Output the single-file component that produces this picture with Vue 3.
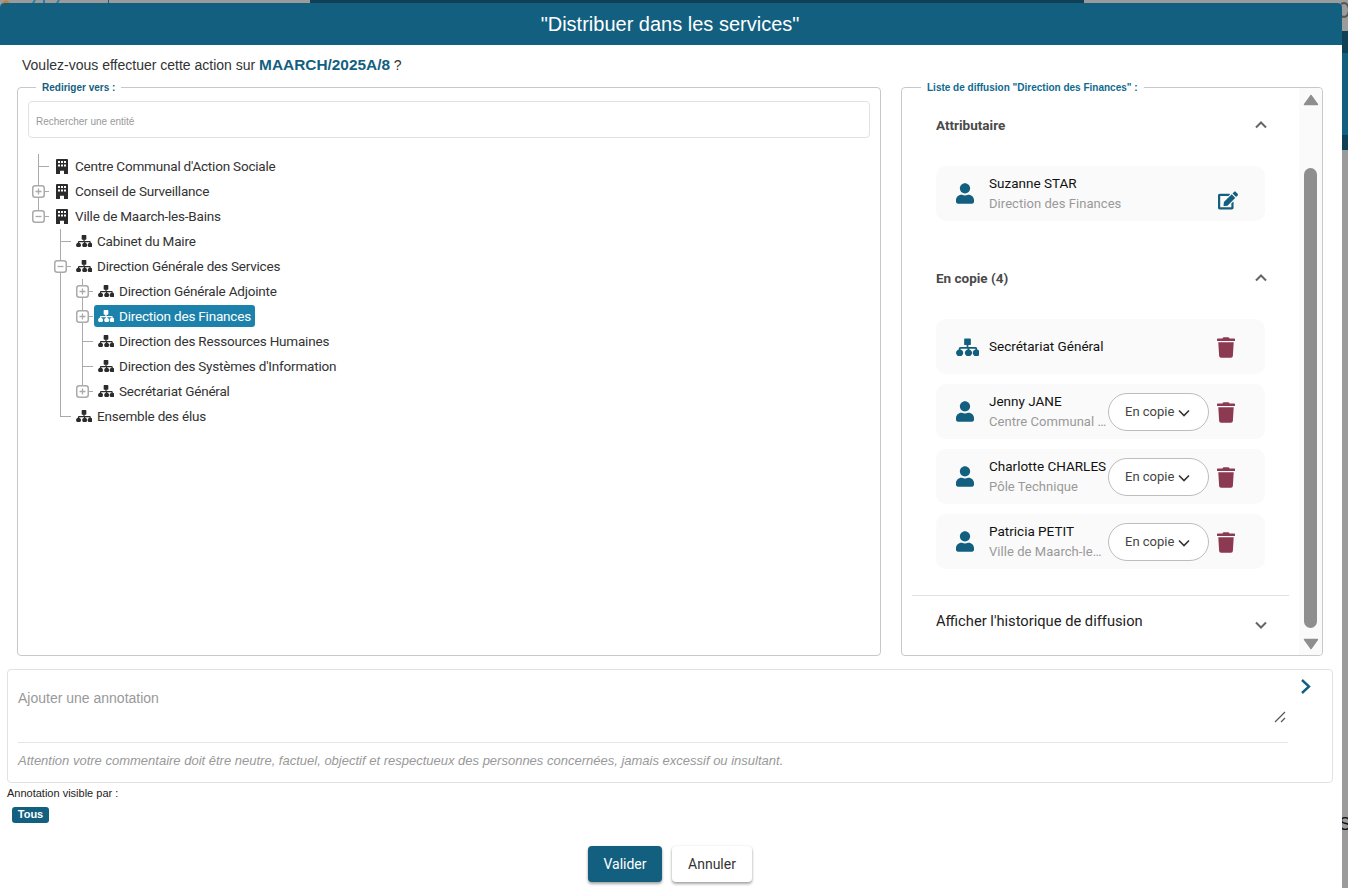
<script setup>
const sitemap = 'M9.5 0h5a1 1 0 0 1 1 1v5a1 1 0 0 1-1 1h-1.6v2h7.6a1.6 1.6 0 0 1 1.6 1.6v.9a3.7 3.7 0 1 1-1.8 0v-.7h-6.4v.7a3.7 3.7 0 1 1-1.8 0v-.7H4.7v.7a3.7 3.7 0 1 1-1.8 0v-.9A1.6 1.6 0 0 1 4.5 9h6.6V7H9.5a1 1 0 0 1-1-1V1a1 1 0 0 1 1-1z'
const building = 'M1 0h10a1 1 0 0 1 1 1v14H8v-3.2H4V15H0V1a1 1 0 0 1 1-1zM2 2v2h2V2zM5 2v2h2V2zM8 2v2h2V2zM2 5.5v2h2v-2zM5 5.5v2h2v-2zM8 5.5v2h2v-2z'
const user = 'M224 256c70.7 0 128-57.3 128-128S294.7 0 224 0 96 57.3 96 128s57.3 128 128 128zm89.6 32h-16.7c-22.2 10.2-46.9 16-72.9 16s-50.6-5.8-72.9-16h-16.7C60.2 288 0 348.2 0 422.4V464c0 26.5 21.5 48 48 48h352c26.5 0 48-21.5 48-48v-41.6c0-74.2-60.2-134.4-134.4-134.4z'
const trash = 'M432 32H312l-9.4-18.7A24 24 0 0 0 281.1 0H166.8a23.72 23.72 0 0 0-21.4 13.3L136 32H16A16 16 0 0 0 0 48v32a16 16 0 0 0 16 16h416a16 16 0 0 0 16-16V48a16 16 0 0 0-16-16zM53.2 467a48 48 0 0 0 47.9 45h245.8a48 48 0 0 0 47.9-45L416 128H32z'
const edit = 'M402.6 83.2l90.2 90.2c3.8 3.8 3.8 10 0 13.8L274.4 405.6l-92.8 10.3c-12.4 1.4-22.9-9.1-21.5-21.5l10.3-92.8L388.8 83.2c3.8-3.8 10-3.8 13.8 0zm162-22.9l-48.8-48.8c-15.2-15.2-39.9-15.2-55.2 0l-35.4 35.4c-3.8 3.8-3.8 10 0 13.8l90.2 90.2c3.8 3.8 10 3.8 13.8 0l35.4-35.4c15.2-15.3 15.2-40 0-55.2zM384 346.2V448H64V128h229.8c3.2 0 6.2-1.3 8.5-3.5l40-40c7.6-7.6 2.2-20.5-8.5-20.5H48C21.5 64 0 85.5 0 112v352c0 26.5 21.5 48 48 48h352c26.5 0 48-21.5 48-48V306.2c0-10.7-12.9-16-20.5-8.5l-40 40c-2.2 2.3-3.5 5.3-3.5 8.5z'

const copies = [
  { name: 'Secrétariat Général', entity: true },
  { name: 'Jenny JANE', sub: "Centre Communal d'Action Sociale", role: 'En copie' },
  { name: 'Charlotte CHARLES', sub: 'Pôle Technique', role: 'En copie' },
  { name: 'Patricia PETIT', sub: 'Ville de Maarch-les-Bains', role: 'En copie' }
]
const level2 = [
  { label: 'Direction Générale Adjointe', closed: true },
  { label: 'Direction des Finances', closed: true, selected: true },
  { label: 'Direction des Ressources Humaines' },
  { label: "Direction des Systèmes d'Information" },
  { label: 'Secrétariat Général', closed: true }
]
</script>

<template>
  <div class="page">
    <div class="backdrop" aria-hidden="true">
      <span class="bd-logo"></span>
      <span class="bd-blue b1"></span>
      <span class="bd-blue b2"></span>
      <span class="bd-blue b3"></span>
      <span class="bd-blue b4"></span>
      <span class="bd-top"></span>
      <span class="bd-ring"></span>
      <span class="bd-side"></span>
      <span class="bd-s">S</span>
    </div>

    <section class="dialog">
      <header class="head">"Distribuer dans les services"</header>
      <p class="question">Voulez-vous effectuer cette action sur <b>MAARCH/2025A/8</b> ?</p>

      <div class="columns">
        <div class="panel left">
          <span class="legend lg-left">Rediriger vers :</span>
          <div class="search">Rechercher une entité</div>
          <ul class="tree">
            <li>
              <div class="node"><span class="anchor"><span class="slot"><svg class="bld" viewBox="0 0 12 15"><path fill-rule="evenodd" :d="building" /></svg></span>Centre Communal d'Action Sociale</span></div>
            </li>
            <li>
              <div class="node">
                <svg class="tog" viewBox="0 0 13 13"><rect x=".75" y=".75" width="11.5" height="11.5" rx="2.5" /><path d="M3.5 6.5h6M6.5 3.5v6" /></svg>
                <span class="anchor"><span class="slot"><svg class="bld" viewBox="0 0 12 15"><path fill-rule="evenodd" :d="building" /></svg></span>Conseil de Surveillance</span>
              </div>
            </li>
            <li>
              <div class="node">
                <svg class="tog" viewBox="0 0 13 13"><rect x=".75" y=".75" width="11.5" height="11.5" rx="2.5" /><path d="M3.5 6.5h6" /></svg>
                <span class="anchor"><span class="slot"><svg class="bld" viewBox="0 0 12 15"><path fill-rule="evenodd" :d="building" /></svg></span>Ville de Maarch-les-Bains</span>
              </div>
              <ul>
                <li>
                  <div class="node"><span class="anchor"><span class="slot"><svg class="org" viewBox="0 0 24 18"><path :d="sitemap" /></svg></span>Cabinet du Maire</span></div>
                </li>
                <li>
                  <div class="node">
                    <svg class="tog" viewBox="0 0 13 13"><rect x=".75" y=".75" width="11.5" height="11.5" rx="2.5" /><path d="M3.5 6.5h6" /></svg>
                    <span class="anchor"><span class="slot"><svg class="org" viewBox="0 0 24 18"><path :d="sitemap" /></svg></span>Direction Générale des Services</span>
                  </div>
                  <ul>
                    <li v-for="n in level2" :key="n.label">
                      <div class="node">
                        <svg v-if="n.closed" class="tog" viewBox="0 0 13 13"><rect x=".75" y=".75" width="11.5" height="11.5" rx="2.5" /><path d="M3.5 6.5h6M6.5 3.5v6" /></svg>
                        <span class="anchor" :class="{ selected: n.selected }"><span class="slot"><svg class="org" viewBox="0 0 24 18"><path :d="sitemap" /></svg></span>{{ n.label }}</span>
                      </div>
                    </li>
                  </ul>
                </li>
                <li>
                  <div class="node"><span class="anchor"><span class="slot"><svg class="org" viewBox="0 0 24 18"><path :d="sitemap" /></svg></span>Ensemble des élus</span></div>
                </li>
              </ul>
            </li>
          </ul>
        </div>

        <div class="panel right">
          <span class="legend lg-right">Liste de diffusion "Direction des Finances" :</span>
          <div class="diff">
            <div class="sec-head first">
              <span>Attributaire</span>
              <svg class="chev" viewBox="0 0 12 8"><path d="M1 6.5l5-5 5 5" /></svg>
            </div>
            <div class="cards">
              <div class="card">
                <span class="c-ico"><svg viewBox="0 0 448 512" class="u"><path :d="user" /></svg></span>
                <div class="c-text wide">
                  <div class="c-name">Suzanne STAR</div>
                  <div class="c-sub">Direction des Finances</div>
                </div>
                <svg class="edit" viewBox="0 0 576 512"><path :d="edit" /></svg>
              </div>
            </div>

            <div class="sec-head">
              <span>En copie (4)</span>
              <svg class="chev" viewBox="0 0 12 8"><path d="M1 6.5l5-5 5 5" /></svg>
            </div>
            <div class="cards">
              <div v-for="c in copies" :key="c.name" class="card">
                <span class="c-ico">
                  <svg v-if="c.entity" viewBox="0 0 24 18" class="s"><path :d="sitemap" /></svg>
                  <svg v-else viewBox="0 0 448 512" class="u"><path :d="user" /></svg>
                </span>
                <div class="c-text" :class="{ wide: !c.role }">
                  <div class="c-name">{{ c.name }}</div>
                  <div v-if="c.sub" class="c-sub">{{ c.sub }}</div>
                </div>
                <div v-if="c.role" class="pill">
                  {{ c.role }}
                  <svg viewBox="0 0 12 8"><path d="M1 1.5l5 5 5-5" /></svg>
                </div>
                <svg class="trash" viewBox="0 0 448 512"><path :d="trash" /></svg>
              </div>
            </div>

            <div class="history">
              <span>Afficher l'historique de diffusion</span>
              <svg class="chev low" viewBox="0 0 12 8"><path d="M1 1.5l5 5 5-5" /></svg>
            </div>
          </div>
          <div class="sbar">
            <svg class="arrow up" viewBox="0 0 16 12"><path d="M8 1.5L14.5 10.5H1.5z" /></svg>
            <span class="thumb"></span>
            <svg class="arrow down" viewBox="0 0 16 12"><path d="M8 10.5L14.5 1.5H1.5z" /></svg>
          </div>
        </div>
      </div>

      <div class="note">
        <div class="note-main">
          <div class="note-input">
            Ajouter une annotation
            <svg class="grip" viewBox="0 0 12 12"><path d="M1 11L11 1M7 11l4-4" /></svg>
          </div>
          <div class="note-hint">Attention votre commentaire doit être neutre, factuel, objectif et respectueux des personnes concernées, jamais excessif ou insultant.</div>
        </div>
        <svg class="send" viewBox="0 0 11 17"><path d="M2 2l7 6.5L2 15" /></svg>
      </div>

      <div class="visible">Annotation visible par :</div>
      <span class="chip">Tous</span>

      <div class="actions">
        <button class="btn primary">Valider</button>
        <button class="btn">Annuler</button>
      </div>
    </section>
  </div>
</template>

<style scoped>
.page {
  position: relative;
  width: 1348px;
  height: 888px;
  overflow: hidden;
  background: #9b9b9b;
  font-family: "Liberation Sans", Arial, sans-serif;
}
.backdrop span { position: absolute; display: block; }
.bd-logo { left: 2px; top: 0; width: 0; height: 0; border-left: 4px solid transparent; border-right: 4px solid transparent; border-bottom: 3px solid #c47f2c; }
.bd-blue { top: 0; width: 2px; height: 3px; background: #1f7fa6; }
.b1 { left: 33px; transform: skewX(-30deg); }
.b2 { left: 43px; }
.b3 { left: 57px; transform: skewX(-30deg); }
.b4 { left: 108px; background: #135f7f; width: 1px; }
.bd-top { left: 310px; top: 0; width: 774px; height: 3px; background: #0f4057; }
.bd-ring { left: 1338px; top: 2px; width: 12px; height: 16px; border: 2px solid #5a5450; border-radius: 50%; box-sizing: border-box; }
.bd-side {
  left: 1342px; top: 31px; width: 6px; height: 119px;
  background: linear-gradient(#0f4057 0 22px, #135f7f 22px 104px, #0f4057 104px);
}
.bd-s { left: 1339px; top: 814px; font-size: 18px; line-height: 20px; color: #111; }

.dialog {
  position: absolute;
  left: 0;
  top: 3px;
  width: 1342px;
  height: 885px;
  background: #fff;
  border-top-left-radius: 4px;
  border-top-right-radius: 4px;
}
.head {
  box-sizing: border-box;
  height: 42px;
  padding-right: 2px;
  background: #135f7f;
  border-radius: 4px 4px 0 0;
  color: #fff;
  font-size: 20px;
  line-height: 42px;
  text-align: center;
}
.question {
  margin: 0;
  padding-left: 22px;
  height: 42px;
  line-height: 40px;
  font-size: 14px;
  color: #333;
}
.question b { color: #135f7f; font-size: 15.4px; }

.columns { display: flex; padding-left: 17px; gap: 20px; }
.panel {
  position: relative;
  box-sizing: border-box;
  height: 569px;
  border: 1px solid #c8c8c8;
  border-radius: 4px;
}
.left { width: 864px; padding: 13px 10px 0; }
.right { width: 422px; display: flex; }
.legend {
  position: absolute;
  top: -6px;
  padding: 0 6px;
  background: #fff;
  font-size: 10px;
  line-height: 12px;
  font-weight: 700;
  color: #135f7f;
}
.lg-left { left: 18px; }
.lg-right { left: 19px; color: #0f6a90; }

.search {
  box-sizing: border-box;
  height: 37px;
  border: 1px solid #e2e2e2;
  border-radius: 4px;
  padding-left: 7px;
  font-size: 10px;
  line-height: 40px;
  color: #999;
}

.tree, .tree ul { list-style: none; margin: 0; padding: 0; }
.tree { margin: 16px 0 0 10px; font-family: Roboto, sans-serif; font-size: 13.5px; letter-spacing: -.2px; color: #333; }
.tree ul { padding-left: 22px; }
.tree li { position: relative; }
.tree li::before {
  content: "";
  position: absolute;
  left: 0;
  top: 0;
  bottom: 0;
  width: 1px;
  background: #aaa;
}
.tree li:last-child::before { bottom: auto; height: 13px; }
.node { position: relative; height: 25px; display: flex; align-items: center; padding-left: 12px; }
.node::before {
  content: "";
  position: absolute;
  left: 0;
  top: 12px;
  width: 11px;
  height: 1px;
  background: #aaa;
}
.anchor {
  display: inline-flex;
  align-items: center;
  height: 22px;
  margin-top: -2px;
  padding: 0 4px;
  border-radius: 3px;
  white-space: nowrap;
}
.anchor.selected { background: #1c82ab; color: #fff; }
.slot { flex: none; width: 16px; margin-right: 5px; display: flex; justify-content: center; margin-top: 1px; }
.org { width: 16px; height: 12px; fill: #2b2b2b; }
.bld { width: 12px; height: 15px; fill: #2b2b2b; }
.selected .org { fill: #fff; }
.tog {
  position: absolute;
  left: -6px;
  top: 6px;
  width: 13px;
  height: 13px;
  z-index: 1;
}
.tog rect { fill: #fff; stroke: #aaa; stroke-width: 1.5; }
.tog path { fill: none; stroke: #aaa; stroke-width: 1.3; }

.diff { flex: 1; min-width: 0; font-family: Roboto, sans-serif; }
.sec-head {
  display: flex;
  align-items: center;
  justify-content: space-between;
  height: 34px;
  margin-top: 40px;
  padding: 0 32px 0 34px;
  font-size: 13.5px;
  font-weight: 700;
  color: #4a4a4a;
}
.sec-head.first { margin-top: 20px; }
.chev { width: 12px; height: 8px; fill: none; stroke: #666; stroke-width: 2; }
.cards { display: flex; flex-direction: column; gap: 10px; margin: 24px 34px 0; }
.card {
  display: flex;
  align-items: center;
  height: 55px;
  padding-left: 20px;
  background: #fafafa;
  border-radius: 10px;
}
.c-ico { flex: none; width: 33px; display: flex; }
.c-ico svg { fill: #135f7f; height: 21px; flex: none; }
.c-ico .u { width: 18px; margin-top: -1px; }
.c-ico .s { width: 23px; height: 18px; margin-top: 1px; }
.c-text { width: 119px; flex: none; min-width: 0; }
.c-text.wide { width: 228px; }
.c-name {
  margin: -1px 0 1px;
  font-size: 13.5px;
  line-height: 20px;
  color: #111;
  white-space: nowrap;
}
.c-sub {
  width: 118px;
  font-size: 13px;
  letter-spacing: .05px;
  line-height: 20px;
  color: #999;
  white-space: nowrap;
  overflow: hidden;
  text-overflow: ellipsis;
}
.wide .c-sub { width: auto; }
.pill {
  box-sizing: border-box;
  flex: none;
  width: 101px;
  height: 38px;
  display: flex;
  align-items: center;
  gap: 4px;
  padding-left: 16px;
  border: 1px solid #bdbdbd;
  border-radius: 19px;
  background: #fff;
  font-size: 13px;
  color: #444;
  margin-right: 8px;
}
.pill svg { width: 12px; height: 8px; margin-top: 2px; fill: none; stroke: #333; stroke-width: 1.6; }
.trash { width: 18px; height: 21px; margin-top: 2px; fill: #8b3a52; flex: none; }
.edit { width: 20px; height: 21px; margin: 13px 0 0 1px; fill: #135f7f; flex: none; }
.history {
  display: flex;
  align-items: center;
  justify-content: space-between;
  height: 50px;
  margin: 26px 10px 0;
  padding: 0 22px 0 24px;
  border-top: 1px solid #e2e2e2;
  font-size: 14.7px;
  color: #222;
}
.chev.low { margin-top: 7px; }

.sbar {
  flex: none;
  width: 23px;
  background: #fafafa;
  border-radius: 0 4px 4px 0;
  display: flex;
  flex-direction: column;
  align-items: center;
}
.arrow { width: 16px; height: 12px; fill: #8e8e8e; stroke: #8e8e8e; stroke-width: 1.4; stroke-linejoin: round; flex: none; }
.arrow.up { margin-top: 6px; }
.thumb { width: 13px; height: 460px; margin-top: 62px; border-radius: 7px; background: #8e8e8e; }
.arrow.down { margin-top: 10px; }

.note {
  box-sizing: border-box;
  display: flex;
  width: 1326px;
  height: 114px;
  margin: 13px 0 0 7px;
  border: 1px solid #e2e2e2;
  border-radius: 4px;
}
.note-main { width: 1270px; margin-left: 10px; flex: none; }
.note-input {
  position: relative;
  box-sizing: border-box;
  height: 73px;
  padding-top: 20px;
  border-bottom: 1px solid #e6e6e6;
  font-size: 14px;
  line-height: 16px;
  color: #999;
}
.grip { position: absolute; right: 2px; bottom: 19px; width: 12px; height: 12px; fill: none; stroke: #555; stroke-width: 1.2; }
.note-hint { margin-top: 10px; font-size: 13px; line-height: 15px; font-style: italic; color: #999; }
.send { width: 11px; height: 17px; margin: 8px 0 0 12px; fill: none; stroke: #135f7f; stroke-width: 2.4; flex: none; }

.visible { margin: 4px 0 0 7px; font-size: 11px; line-height: 13px; color: #222; }
.chip {
  display: block;
  box-sizing: border-box;
  width: 37px;
  height: 16px;
  margin: 7px 0 0 12px;
  background: #135f7f;
  border-radius: 3px;
  color: #fff;
  font-size: 11px;
  font-weight: 700;
  line-height: 15px;
  text-align: center;
}
.actions { display: flex; justify-content: center; gap: 10px; margin-top: 23px; padding-right: 2px; }
.btn {
  height: 36px;
  width: 80px;
  padding: 0;
  border: 0;
  border-radius: 4px;
  background: #fff;
  font-family: Roboto, sans-serif;
  font-size: 14px;
  color: #333;
  box-shadow: 0 2px 3px rgba(0, 0, 0, .35), 0 0 2px rgba(0, 0, 0, .1);
}
.btn.primary { width: 74px; background: #135f7f; color: #fff; }
</style>

<style>
html, body { margin: 0; overflow: hidden; }
</style>
